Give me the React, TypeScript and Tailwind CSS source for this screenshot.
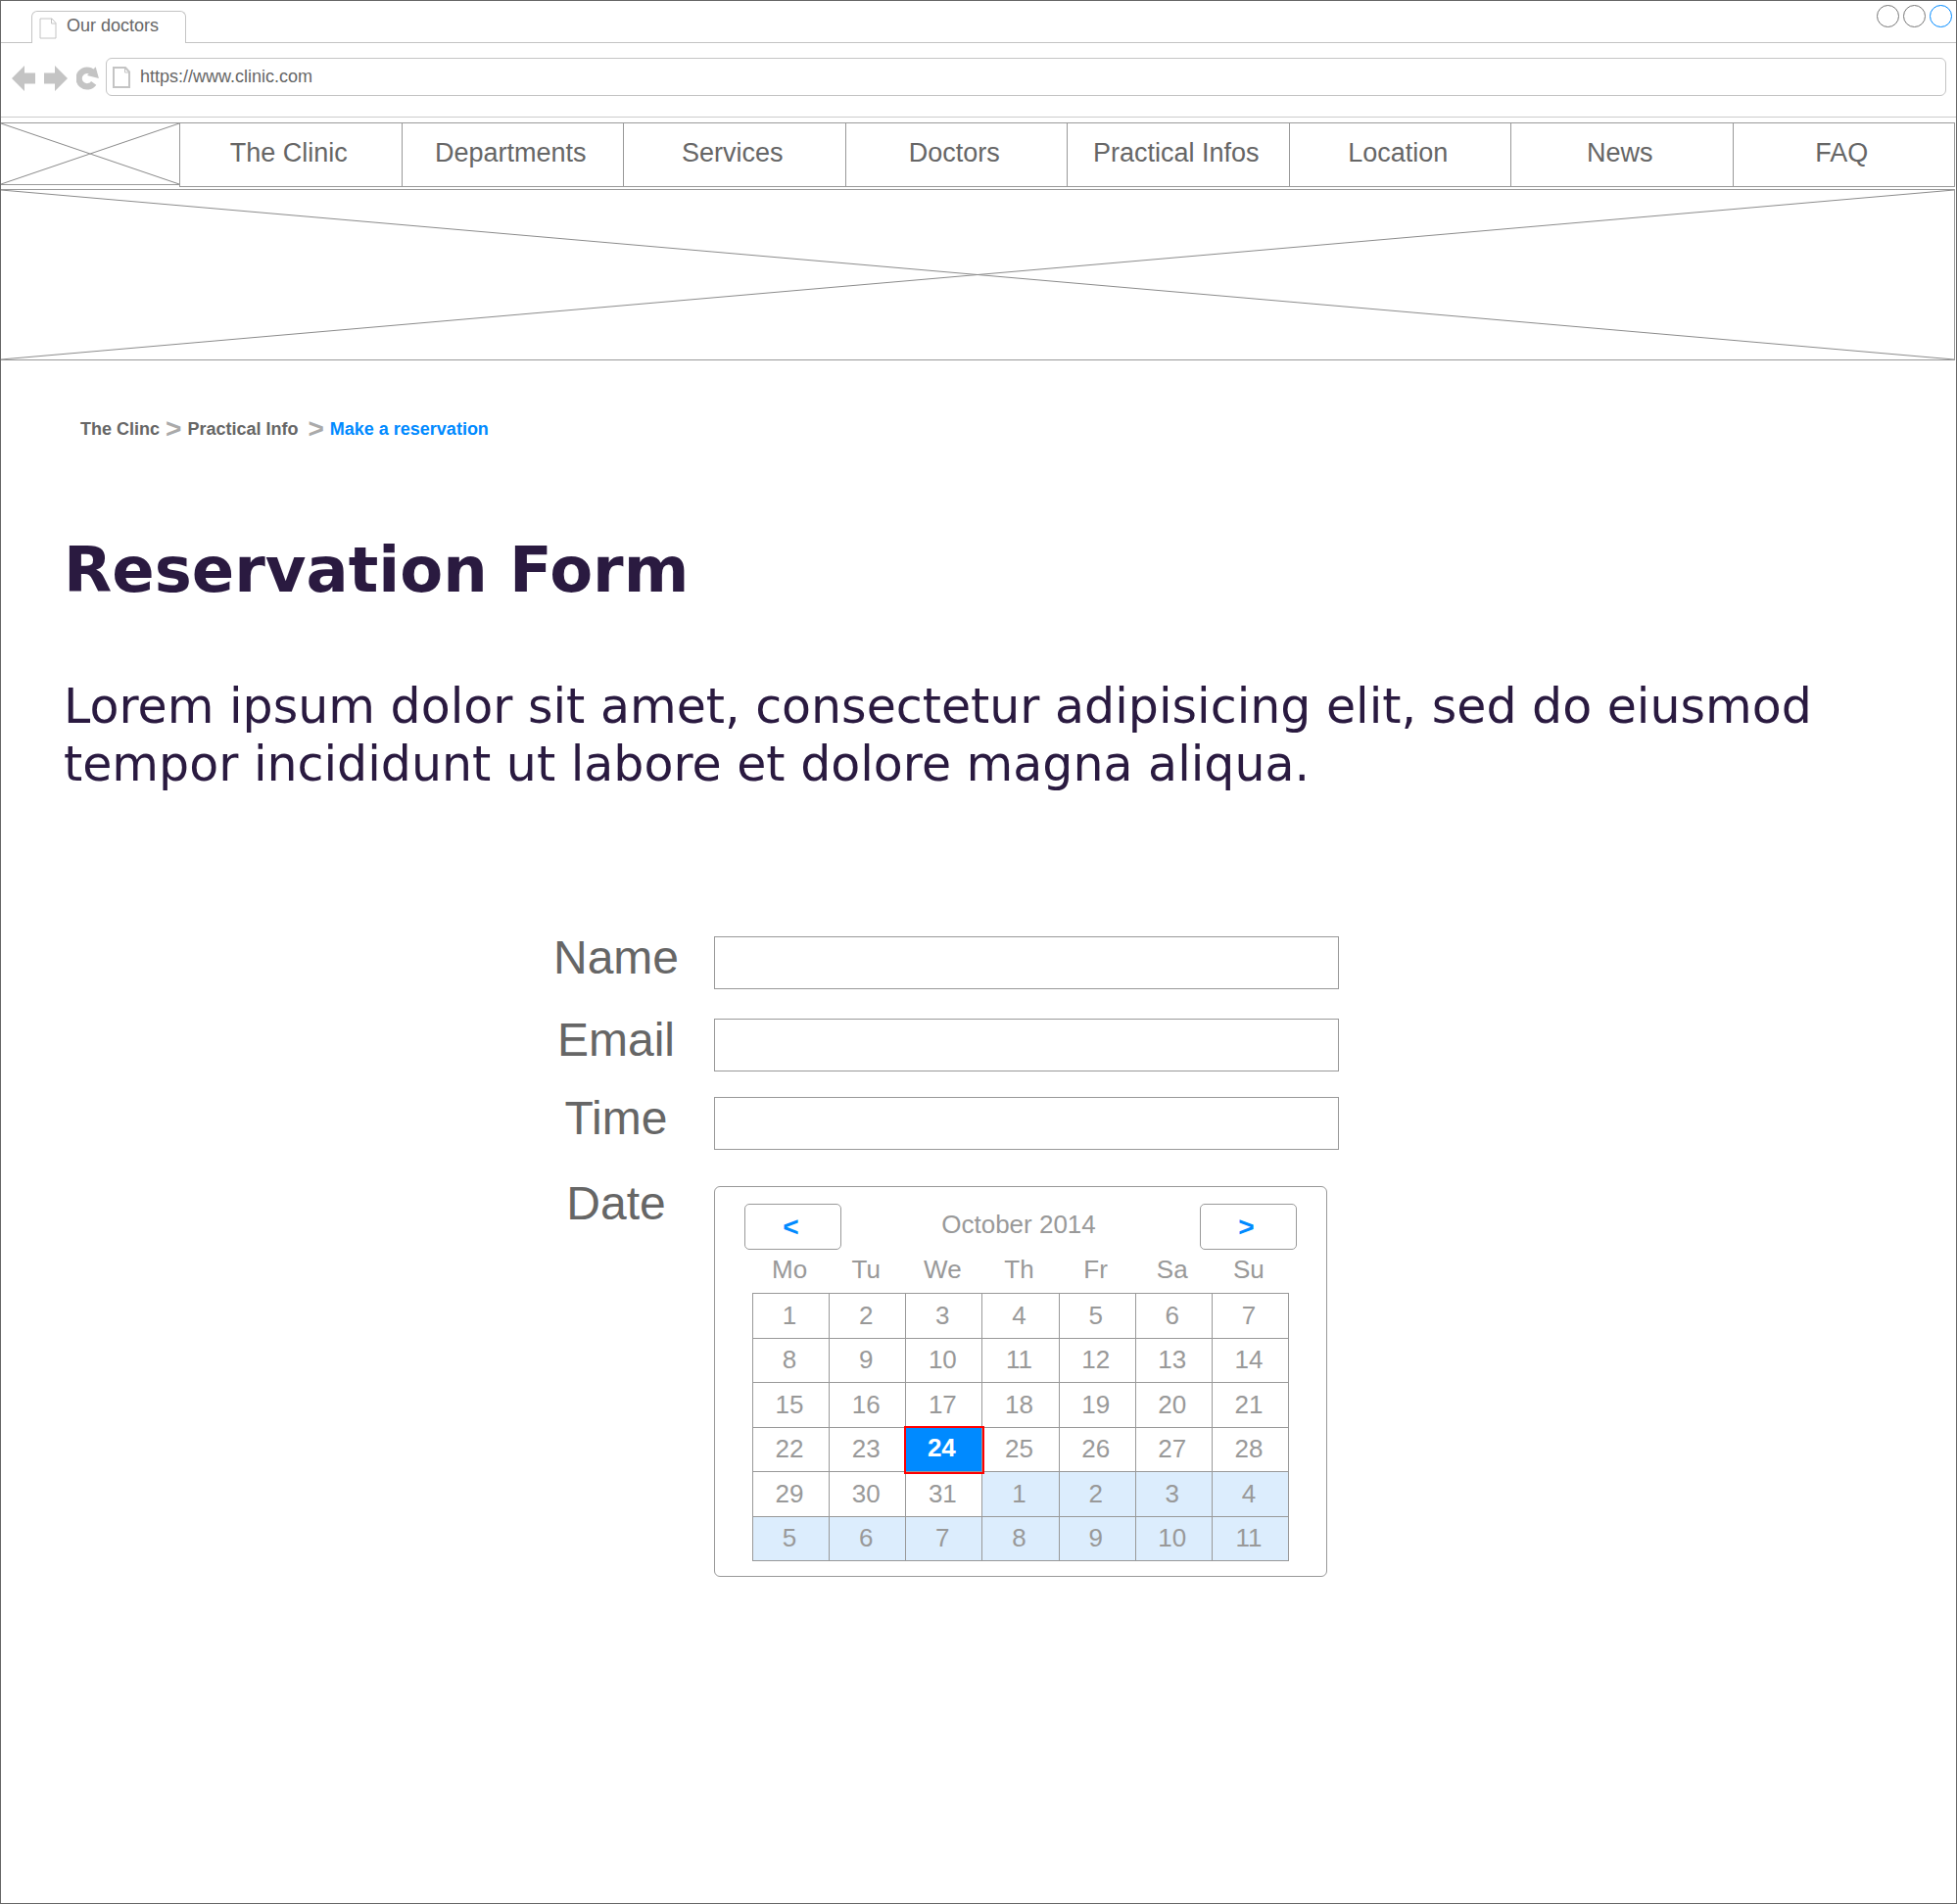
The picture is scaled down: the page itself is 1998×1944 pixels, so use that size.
import React, { useState } from "react";

const NAV_ITEMS = ["The Clinic", "Departments", "Services", "Doctors", "Practical Infos", "Location", "News", "FAQ"];
const WEEKDAYS = ["Mo", "Tu", "We", "Th", "Fr", "Sa", "Su"];
const FIELDS = [
  { id: "name", label: "Name", row: "h-[84px]" },
  { id: "email", label: "Email", row: "h-20" },
  { id: "time", label: "Time", row: "h-[91px]" },
];

// Six weeks: 31 days of the month, then the first days of the next one.
const WEEKS = Array.from({ length: 6 }, (_, w) =>
  Array.from({ length: 7 }, (_, d) => {
    const n = w * 7 + d + 1;
    return { day: n > 31 ? n - 31 : n, next: n > 31 };
  }),
);

function Crossed({ className }: { className: string }) {
  return (
    <div className={className} role="img" aria-label="Image placeholder">
      <svg className="block h-full w-full" viewBox="0 0 100 100" preserveAspectRatio="none" stroke="#8c8c8c">
        <path d="M0 0L100 100M0 100L100 0" vectorEffect="non-scaling-stroke" fill="none" />
      </svg>
    </div>
  );
}

function PageIcon({ stroke, className }: { stroke: number; className: string }) {
  return (
    <svg className={className} viewBox="0 0 18 22" fill="none" stroke="#c4c4c4" strokeWidth={stroke}>
      <path d="M1 1H13L17 5.500V21H1Z" />
      <path d="M12.500 1V6H17" strokeWidth="1" />
    </svg>
  );
}

function BrowserChrome() {
  return (
    <header>
      <div className="flex h-[43px] items-stretch">
        <div className="w-[31px] border-b border-[#c4c4c4]" />
        <div className="mt-[10px] flex w-[158px] items-start rounded-t-md border border-b-0 border-[#c4c4c4] pl-[7px]">
          <PageIcon stroke={1} className="mt-[6px] h-[22px] w-[18px]" />
          <span className="ml-[10px] text-lg leading-[29px] text-[#666666]">Our doctors</span>
        </div>
        <div className="flex flex-1 items-start justify-end gap-1 border-b border-[#c4c4c4] pt-1 pr-1">
          <button type="button" aria-label="Minimize" className="size-[23px] rounded-full border border-[#777777]" />
          <button type="button" aria-label="Maximize" className="size-[23px] rounded-full border border-[#777777]" />
          <button type="button" aria-label="Close" className="size-[23px] rounded-full border border-[#008aff]" />
        </div>
      </div>
      <div className="flex h-[76px] items-start border-b border-[#cccccc] pt-[15px] pr-[10px] pl-[11px]">
        <div className="mt-2 flex items-center gap-[9px]">
          <button type="button" aria-label="Back">
            <svg className="block h-[26px] w-6" viewBox="0 0 24 26" fill="#c4c4c4">
              <path d="M0 13L13 0V7.500H24V18.500H13V26Z" />
            </svg>
          </button>
          <button type="button" aria-label="Forward">
            <svg className="block h-[26px] w-6" viewBox="0 0 24 26" fill="#c4c4c4">
              <path d="M24 13L11 0V7.500H0V18.500H11V26Z" />
            </svg>
          </button>
          <button type="button" aria-label="Reload">
            <svg className="block h-[26px] w-6" viewBox="0 0 24 26">
              <path d="M17.700 17.800A8.300 8.300 0 1 1 16.800 7.200" fill="none" stroke="#c4c4c4" strokeWidth="6.400" />
              <path d="M19.700 1.300L22.900 13L11 10Z" fill="#c4c4c4" />
            </svg>
          </button>
        </div>
        <div className="ml-[6px] flex h-[39px] flex-1 items-start rounded-md border border-[#c4c4c4] pl-[6px]">
          <PageIcon stroke={2} className="mt-2 h-[22px] w-[18px] shrink-0" />
          <input
            type="text"
            aria-label="Address"
            defaultValue="https://www.clinic.com"
            className="ml-[10px] h-[37px] min-w-0 flex-1 text-lg leading-[37px] text-[#666666] outline-none"
          />
        </div>
      </div>
    </header>
  );
}

function Calendar() {
  const [selected, setSelected] = useState(24);
  return (
    <div className="w-[626px] rounded-md border border-[#999999] pt-[17px] pb-[15px] pl-[30px] text-[26px] text-[#999999]">
      <div className="flex w-[564px] items-start justify-between">
        <button type="button" aria-label="Previous month" className="h-[47px] w-[99px] rounded-[5px] border border-[#999999] pr-1 text-[28px] leading-[45px] font-bold text-[#008aff]">
          &lt;
        </button>
        <span className="pr-1 leading-[43px]">October 2014</span>
        <button type="button" aria-label="Next month" className="h-[47px] w-[99px] rounded-[5px] border border-[#999999] pr-1 text-[28px] leading-[45px] font-bold text-[#008aff]">
          &gt;
        </button>
      </div>
      <table className="ml-2 w-[548px] table-fixed border-collapse">
        <thead>
          <tr>
            {WEEKDAYS.map((d) => (
              <th key={d} scope="col" className="h-[44px] p-0 pr-[3px] pb-1 font-normal leading-10">
                {d}
              </th>
            ))}
          </tr>
        </thead>
        <tbody>
          {WEEKS.map((week, w) => (
            <tr key={w} className="h-[46px] even:h-[45px]">
              {week.map(({ day, next }) => {
                const active = !next && day === selected;
                return (
                  <td
                    key={day}
                    className={
                      active
                        ? "border border-[#999999] bg-[#008aff] p-0 outline-2 outline-[#ff0000]"
                        : next
                          ? "border border-[#999999] bg-[#dcedfd] p-0"
                          : "border border-[#999999] p-0"
                    }
                  >
                    <button
                      type="button"
                      onClick={() => !next && setSelected(day)}
                      className={
                        active
                          ? "block h-11 w-full pr-[5px] pb-1 leading-10 font-bold text-white"
                          : "block h-11 w-full pr-[3px] pb-[2px] leading-10"
                      }
                    >
                      {day}
                    </button>
                  </td>
                );
              })}
            </tr>
          ))}
        </tbody>
      </table>
    </div>
  );
}

export default function App() {
  return (
    <div className="min-h-screen border border-[#666666] bg-white font-['Liberation_Sans',Arial,sans-serif] text-[#666666]">
      <BrowserChrome />

      <div className="mt-[5px] mr-px flex items-start">
        <Crossed className="h-16 w-[182px] border-y border-[#999999]" />
        <nav className="grid h-[66px] flex-1 grid-cols-8 border-y border-l border-[#999999]">
          {NAV_ITEMS.map((item) => (
            <a key={item} href="#" className="border-r border-[#999999] pr-1 text-center text-[27px] leading-[60px]">
              {item}
            </a>
          ))}
        </nav>
      </div>

      <Crossed className="mt-[2px] mr-px h-[175px] border border-l-0 border-[#999999]" />

      <main className="pb-10">
        <nav aria-label="Breadcrumb" className="mt-[58px] ml-[81px] flex items-center text-lg leading-6 font-bold">
          <a href="#">The Clinc</a>
          <span className="mx-[6px] text-[28px] leading-6 text-[#aaaaaa]">&gt;</span>
          <a href="#">Practical Info</a>
          <span className="mr-[6px] ml-[10px] text-[28px] leading-6 text-[#aaaaaa]">&gt;</span>
          <a href="#" aria-current="page" className="text-[#008aff]">
            Make a reservation
          </a>
        </nav>

        <div className="pr-20 pl-16 font-['DejaVu_Sans',Verdana,sans-serif] text-[#2a1a40]">
          <h1 className="mt-[92px] text-[64px] leading-[80px] font-bold">Reservation Form</h1>
          <p className="mt-[70px] text-[49px] leading-[59px]">
            Lorem ipsum dolor sit amet, consectetur adipisicing elit, sed do eiusmod tempor incididunt ut labore et
            dolore magna aliqua.
          </p>
        </div>

        <form className="mx-auto mt-[146px] w-fit pr-[74px]" onSubmit={(e) => e.preventDefault()}>
          {FIELDS.map((f) => (
            <div key={f.id} className={f.row + " flex items-start"}>
              <label htmlFor={f.id} className="w-36 text-center text-[48px] leading-[44px]">
                {f.label}
              </label>
              <input id={f.id} type="text" className="ml-7 h-[54px] w-[638px] border border-[#999999] px-3 text-[26px] outline-none" />
            </div>
          ))}
          <div role="group" aria-labelledby="date-label" className="flex items-start">
            <span id="date-label" className="w-36 text-center text-[48px] leading-9">
              Date
            </span>
            <div className="ml-7">
              <Calendar />
            </div>
          </div>
        </form>
      </main>
    </div>
  );
}
